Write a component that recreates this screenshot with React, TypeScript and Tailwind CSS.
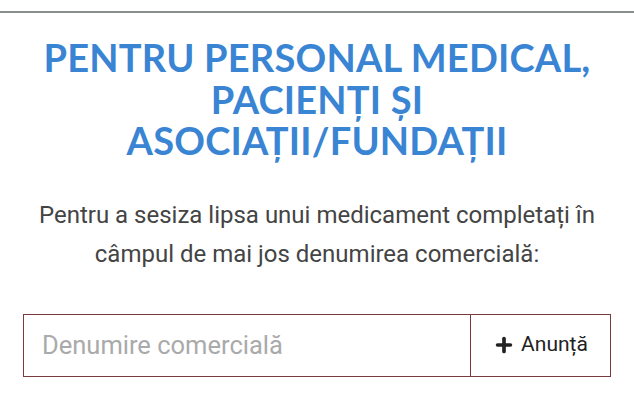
import { Plus } from "lucide-react";

export default function App() {
  return (
    <div className="w-[634px] h-[413px] bg-white overflow-hidden">
      <div className="pt-[11px]">
        <div className="h-[2px] bg-[#8a8f8c]" />
      </div>
      <div className="flex flex-col items-center pt-[24px]">
        <h1 className="text-center text-[38px] leading-[41.5px] font-bold text-[#3a84d4] tracking-[0.2px] font-['Lato',sans-serif]">
          PENTRU PERSONAL MEDICAL,
          <br />
          PACIENȚI ȘI
          <br />
          ASOCIAȚII/FUNDAȚII
        </h1>
        <p className="mt-[34px] text-center text-[24px] leading-[39px] text-[#444] font-['Roboto',sans-serif]">
          Pentru a sesiza lipsa unui medicament completați în
          <br />
          câmpul de mai jos denumirea comercială:
        </p>
      </div>
      <div className="mx-[23px] mt-[40px] flex h-[63px] w-[588px] border border-[#7a3b3e] font-['Roboto',sans-serif]">
        <input
          className="flex-1 min-w-0 pl-[18px] text-[25.5px] text-[#333] placeholder:text-[#aaa] outline-none"
          placeholder="Denumire comercială"
        />
        <button className="flex w-[140px] items-center justify-center gap-[6px] border-l border-[#7a3b3e] text-[21px] text-[#222]">
          <Plus size={22} strokeWidth={4} className="text-[#222]" />
          Anunță
        </button>
      </div>
    </div>
  );
}
